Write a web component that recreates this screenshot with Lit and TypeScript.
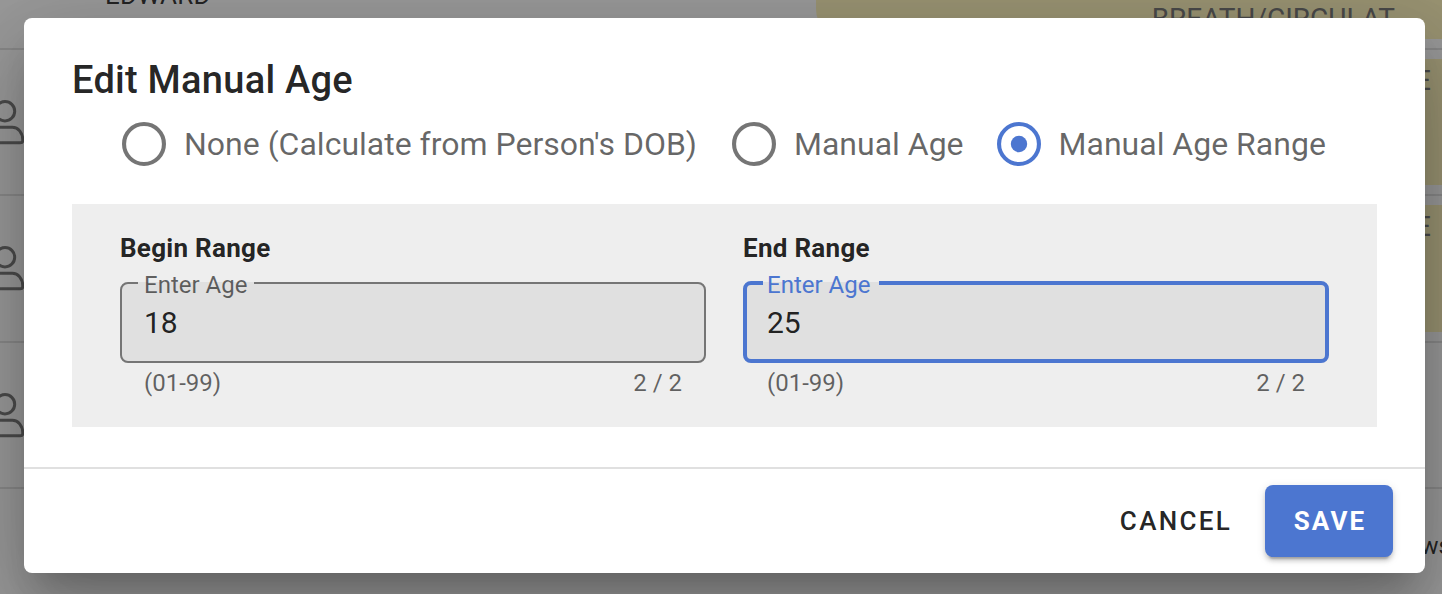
import { LitElement, html, css, svg } from "lit";
import { customElement, property } from "lit/decorators.js";

const personIcon = html`<svg class="person" viewBox="0 0 44 46" width="44" height="46">
  ${svg`<circle cx="25" cy="12.200" r="9.7"/><path d="M6 43.800c-2.2 0-2.4-.5-2.4-2.2C3.6 33.5 9.5 28.300 16 28.300h16.500c5.400 0 10.300 5.200 10.300 13 0 1.900-.5 2.500-2.400 2.500z"/>`}
</svg>`;

@customElement("age-radio")
export class AgeRadio extends LitElement {
  @property() label = "";
  @property({ type: Boolean, reflect: true }) checked = false;

  static styles = css`
    :host {
      display: flex;
      align-items: center;
      gap: 18px;
      color: rgba(0, 0, 0, 0.6);
      font-size: 32px;
      line-height: 44px;
      white-space: nowrap;
    }
    .ring {
      display: block;
      fill: none;
      stroke: #757575;
      stroke-width: 4.1;
    }
    :host([checked]) .ring {
      stroke: #4c76d0;
    }
    .dot {
      fill: #4c76d0;
      stroke: none;
    }
  `;

  render() {
    return html`<svg class="ring" width="44" height="44" viewBox="0 0 44 44">
        <circle cx="22" cy="22" r="19.95"></circle>
        ${this.checked ? svg`<circle class="dot" cx="22" cy="22" r="8.200"/>` : null}
      </svg>
      <span>${this.label}</span>`;
  }
}

@customElement("age-field")
export class AgeField extends LitElement {
  @property() heading = "";
  @property() value = "";
  @property({ type: Boolean, reflect: true }) focused = false;

  static styles = css`
    :host {
      display: flex;
      flex-direction: column;
      width: 586px;
      color: rgba(0, 0, 0, 0.87);
      white-space: nowrap;
    }
    .heading {
      font-size: 26px;
      font-weight: 700;
      line-height: 40px;
      height: 54px;
      letter-spacing: 0.28px;
    }
    .box {
      position: relative;
      box-sizing: border-box;
      height: 81px;
      padding: 20px 25px 0 24px;
      border-radius: 8px;
      background: #e0e0e0;
      font-size: 30px;
      line-height: 41px;
    }
    .outline {
      position: absolute;
      inset: -11px 0 0 0;
      margin: 0;
      padding: 0 0 0 16px;
      border: 2px solid #757575;
      border-radius: 8px;
    }
    .notch {
      width: 116px;
      height: 24px;
      padding: 0;
    }
    .label {
      position: absolute;
      left: 24px;
      top: -12px;
      font-size: 24px;
      line-height: 30px;
      color: rgba(0, 0, 0, 0.6);
    }
    .details {
      display: flex;
      justify-content: space-between;
      padding: 4px 24px 0;
      font-size: 24px;
      line-height: 32px;
      color: rgba(0, 0, 0, 0.6);
    }
    :host([focused]) .outline {
      border: 4px solid #4c76d0;
    }
    :host([focused]) .label {
      color: #4c76d0;
    }
  `;

  render() {
    return html`<div class="heading">${this.heading}</div>
      <div class="box">
        <fieldset class="outline"><legend class="notch"></legend></fieldset>
        <span class="label">Enter Age</span>
        <span>${this.value}</span>
      </div>
      <div class="details"><span>(01-99)</span><span>2 / 2</span></div>`;
  }
}

@customElement("app-root")
export class AppRoot extends LitElement {
  static styles = css`
    :host {
      display: block;
      position: relative;
      width: 1442px;
      height: 594px;
      overflow: hidden;
      font-family: Roboto, "Liberation Sans", sans-serif;
      background: #fff;
    }
    .table {
      display: grid;
      grid-template-rows: 50px 146px 147px 146px 105px;
      color: rgba(0, 0, 0, 0.87);
      white-space: nowrap;
    }
    .row {
      box-sizing: border-box;
      display: flex;
      justify-content: space-between;
      border-bottom: 2px solid #e0e0e0;
      overflow: hidden;
    }
    .row.last {
      border: 0;
      justify-content: flex-end;
    }
    .name {
      margin: -19px 0 0 105px;
      font-size: 26px;
      line-height: 28px;
      letter-spacing: 0.25px;
    }
    .person {
      display: block;
      margin: 49px 0 0 -20px;
      fill: none;
      stroke: #707070;
      stroke-width: 3;
    }
    .tag {
      box-sizing: border-box;
      width: 626px;
      margin: 9px 0;
      border-radius: 30px 0 0 30px;
      background: #fff4b8;
      color: #6c6c6c;
      font-size: 28px;
      line-height: 32px;
      text-align: right;
      padding: 6px 11px 0 0;
    }
    .row.first .tag {
      margin-top: -60px;
      padding: 63px 47px 0 0;
    }
    .ws {
      margin: 41px -9px 0 0;
      font-size: 24px;
      line-height: 32px;
    }
    .overlay {
      position: absolute;
      inset: 0;
      background: rgba(33, 33, 33, 0.46);
    }
    .dialog {
      position: absolute;
      left: 24px;
      top: 18px;
      width: 1401px;
      height: 555px;
      box-sizing: border-box;
      display: flex;
      flex-direction: column;
      border-radius: 8px;
      background: #fff;
      box-shadow:
        0 22px 30px -14px rgba(0, 0, 0, 0.2),
        0 48px 76px 6px rgba(0, 0, 0, 0.14),
        0 18px 92px 16px rgba(0, 0, 0, 0.12);
      color: rgba(0, 0, 0, 0.87);
      white-space: nowrap;
    }
    .title {
      padding: 30px 48px 0;
      height: 74px;
      font-size: 38px;
      font-weight: 500;
      line-height: 64px;
      letter-spacing: 0.26px;
    }
    .radios {
      display: flex;
      align-items: center;
      gap: 33px;
      padding-left: 98px;
      height: 44px;
    }
    .radios age-radio:first-child {
      margin-right: 2px;
    }
    .panel {
      display: flex;
      gap: 37px;
      box-sizing: border-box;
      width: 1305px;
      height: 223px;
      margin: 38px 0 0 48px;
      padding: 24px 48px 0;
      background: #eee;
    }
    .actions {
      display: flex;
      justify-content: flex-end;
      align-items: flex-start;
      flex: 1;
      margin-top: 40px;
      padding: 16px 32px 0;
      border-top: 2px solid #e0e0e0;
    }
    .button {
      box-sizing: border-box;
      height: 72px;
      border: 0;
      padding: 0;
      border-radius: 8px;
      background: none;
      color: rgba(0, 0, 0, 0.87);
      font: 500 26px/72px Roboto, "Liberation Sans", sans-serif;
      letter-spacing: 2.320px;
      text-align: center;
    }
    .cancel {
      width: 146px;
      margin-right: 16px;
    }
    .save {
      width: 128px;
      background: #4c76d0;
      color: #fff;
      font-weight: 700;
      letter-spacing: 2.100px;
      padding-left: 2px;
      box-shadow:
        0 6px 2px -4px rgba(0, 0, 0, 0.2),
        0 4px 4px 0 rgba(0, 0, 0, 0.14),
        0 2px 10px 0 rgba(0, 0, 0, 0.12);
    }
  `;

  render() {
    return html`
      <div class="table">
        <div class="row first">
          <span class="name">EDWARD</span><span class="tag">BREATH/CIRCULAT</span>
        </div>
        <div class="row">${personIcon}<span class="tag">E</span></div>
        <div class="row">${personIcon}<span class="tag">E</span></div>
        <div class="row">${personIcon}</div>
        <div class="row last"><span class="ws">ws</span></div>
      </div>
      <div class="overlay"></div>
      <div class="dialog" role="dialog">
        <div class="title">Edit Manual Age</div>
        <div class="radios">
          <age-radio label="None (Calculate from Person's DOB)"></age-radio>
          <age-radio label="Manual Age"></age-radio>
          <age-radio label="Manual Age Range" checked></age-radio>
        </div>
        <div class="panel">
          <age-field heading="Begin Range" value="18"></age-field>
          <age-field heading="End Range" value="25" focused></age-field>
        </div>
        <div class="actions">
          <button class="button cancel">CANCEL</button>
          <button class="button save">SAVE</button>
        </div>
      </div>
    `;
  }
}
